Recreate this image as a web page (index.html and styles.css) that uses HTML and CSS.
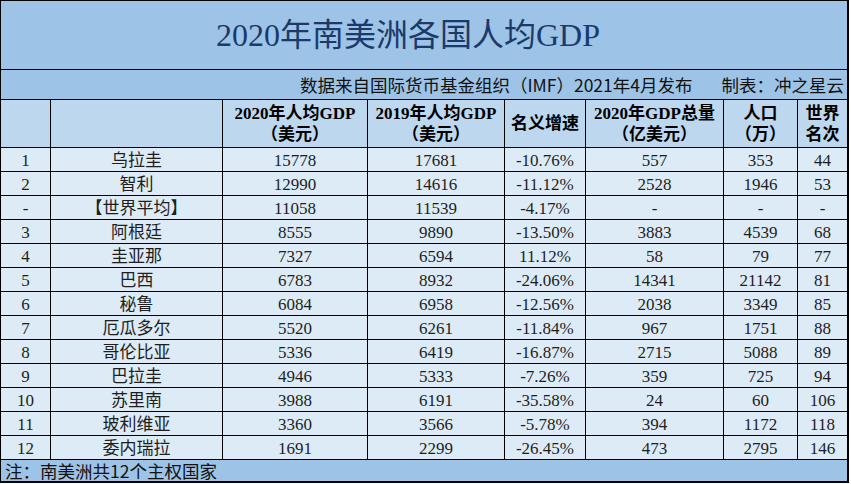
FILE: index.html
```html
<!DOCTYPE html>
<html lang="zh-CN">
<head>
<meta charset="utf-8">
<title>2020年南美洲各国人均GDP</title>
<link rel="stylesheet" href="styles.css">
</head>
<body>
<div class="sheet">
  <div class="title"><h1>2020年南美洲各国人均GDP</h1></div>
  <div class="source"><span>数据来自国际货币基金组织（IMF）2021年4月发布</span><span>制表：冲之星云</span></div>
  <div class="grid">
    <div class="hd"></div>
    <div class="hd"></div>
    <div class="hd">2020年人均GDP<br>（美元）</div>
    <div class="hd">2019年人均GDP<br>（美元）</div>
    <div class="hd">名义增速</div>
    <div class="hd">2020年GDP总量<br>（亿美元）</div>
    <div class="hd">人口<br>（万）</div>
    <div class="hd last">世界<br>名次</div>

    <div class="c">1</div><div class="c">乌拉圭</div><div class="c">15778</div><div class="c">17681</div><div class="c">-10.76%</div><div class="c">557</div><div class="c">353</div><div class="c last">44</div>
    <div class="c">2</div><div class="c">智利</div><div class="c">12990</div><div class="c">14616</div><div class="c">-11.12%</div><div class="c">2528</div><div class="c">1946</div><div class="c last">53</div>
    <div class="c">-</div><div class="c avg">【世界平均】</div><div class="c">11058</div><div class="c">11539</div><div class="c">-4.17%</div><div class="c">-</div><div class="c">-</div><div class="c last">-</div>
    <div class="c">3</div><div class="c">阿根廷</div><div class="c">8555</div><div class="c">9890</div><div class="c">-13.50%</div><div class="c">3883</div><div class="c">4539</div><div class="c last">68</div>
    <div class="c">4</div><div class="c">圭亚那</div><div class="c">7327</div><div class="c">6594</div><div class="c">11.12%</div><div class="c">58</div><div class="c">79</div><div class="c last">77</div>
    <div class="c">5</div><div class="c">巴西</div><div class="c">6783</div><div class="c">8932</div><div class="c">-24.06%</div><div class="c">14341</div><div class="c">21142</div><div class="c last">81</div>
    <div class="c">6</div><div class="c">秘鲁</div><div class="c">6084</div><div class="c">6958</div><div class="c">-12.56%</div><div class="c">2038</div><div class="c">3349</div><div class="c last">85</div>
    <div class="c">7</div><div class="c">厄瓜多尔</div><div class="c">5520</div><div class="c">6261</div><div class="c">-11.84%</div><div class="c">967</div><div class="c">1751</div><div class="c last">88</div>
    <div class="c">8</div><div class="c">哥伦比亚</div><div class="c">5336</div><div class="c">6419</div><div class="c">-16.87%</div><div class="c">2715</div><div class="c">5088</div><div class="c last">89</div>
    <div class="c">9</div><div class="c">巴拉圭</div><div class="c">4946</div><div class="c">5333</div><div class="c">-7.26%</div><div class="c">359</div><div class="c">725</div><div class="c last">94</div>
    <div class="c">10</div><div class="c">苏里南</div><div class="c">3988</div><div class="c">6191</div><div class="c">-35.58%</div><div class="c">24</div><div class="c">60</div><div class="c last">106</div>
    <div class="c">11</div><div class="c">玻利维亚</div><div class="c">3360</div><div class="c">3566</div><div class="c">-5.78%</div><div class="c">394</div><div class="c">1172</div><div class="c last">118</div>
    <div class="c">12</div><div class="c">委内瑞拉</div><div class="c">1691</div><div class="c">2299</div><div class="c">-26.45%</div><div class="c">473</div><div class="c">2795</div><div class="c last">146</div>
  </div>
  <div class="footer">注：南美洲共12个主权国家</div>
</div>
</body>
</html>
```
FILE: styles.css
```css
* { box-sizing: border-box; }
html, body { margin: 0; padding: 0; background: #ffffff; }

.sheet {
  width: 849px;
  height: 483px;
  border-top: 1px solid #000;
  border-left: 1px solid #000;
  border-right: 2px solid #000;
  border-bottom: 2px solid #000;
  display: flex;
  flex-direction: column;
}

.title {
  height: 69px;
  background: #9dc3e6;
  border-bottom: 1px solid #000;
  display: flex;
  align-items: center;
  justify-content: center;
  padding-right: 32px;
}
.title h1 {
  margin: 0;
  font-family: "Liberation Serif", "Noto Sans CJK SC", serif;
  font-weight: 400;
  font-size: 32px;
  line-height: 36px;
  color: #1b3a6b;
}

.source {
  height: 30px;
  background: #9dc3e6;
  border-bottom: 1px solid #000;
  display: flex;
  justify-content: flex-end;
  align-items: center;
  gap: 29px;
  padding-right: 3px;
  font-family: "Noto Sans CJK SC", sans-serif;
  font-size: 17.5px;
  line-height: 22px;
  color: #111;
}

.grid {
  display: grid;
  grid-template-columns: 50px 172px 145px 137px 81px 138px 74px 1fr;
  grid-auto-rows: 24px;
  grid-template-rows: 48px;
  font-family: "Liberation Serif", "Noto Sans CJK SC", serif;
}

.hd, .c {
  border-right: 1px solid #000;
  border-bottom: 1px solid #000;
  display: flex;
  align-items: center;
  justify-content: center;
  text-align: center;
}
.hd.last, .c.last { border-right: none; }

.hd {
  background: #bdd7ee;
  font-weight: 700;
  font-size: 17px;
  line-height: 21px;
  color: #000;
}

.c {
  background: #ddebf7;
  font-size: 17px;
  line-height: 20px;
  padding-top: 3px;
  color: #1e1e1e;
  white-space: nowrap;
}

.footer {
  height: 21px;
  background: #9dc3e6;
  display: flex;
  align-items: center;
  padding-left: 4px;
  font-family: "Noto Sans CJK SC", sans-serif;
  font-size: 17.5px;
  line-height: 21px;
  color: #111;
}
```
